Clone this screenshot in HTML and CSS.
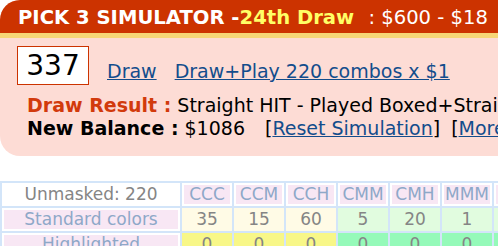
FILE: index.html
```html
<!DOCTYPE html>
<html lang="en">
<head>
    <meta charset="UTF-8">
    <meta name="viewport" content="width=device-width, initial-scale=1.0">
    <title>Pick 3 Simulator</title>
    <link rel="stylesheet" href="styles.css">
</head>
<body>
    <div class="page">
        <!-- Simulator panel -->
        <div class="sim">
            <div class="sim-title">PICK 3 SIMULATOR -<span class="draw-no">24th Draw</span><span class="cost"> : $600 - $18</span></div>
            <div class="sim-body">
                <div class="sim-top">
                    <div class="number">337</div>
                    <a href="#" class="action">Draw</a>
                    <a href="#" class="action">Draw+Play 220 combos x $1</a>
                </div>
                <div class="line"><span class="label red">Draw Result :</span> Straight HIT - Played Boxed+Straight 337</div>
                <div class="line"><span class="label">New Balance :</span> $1086<span class="bracket">[<a href="#">Reset Simulation</a>]</span><span class="bracket small-gap">[<a href="#">More Info</a>]</span></div>
            </div>
        </div>

        <!-- Combo mask table -->
        <table class="masks">
            <tr>
                <td class="first plain">Unmasked: 220</td>
                <td class="head">CCC</td>
                <td class="head">CCM</td>
                <td class="head">CCH</td>
                <td class="head">CMM</td>
                <td class="head">CMH</td>
                <td class="head">MMM</td>
                <td class="head">MMH</td>
            </tr>
            <tr>
                <td class="first head">Standard colors</td>
                <td class="val soft-yellow">35</td>
                <td class="val soft-yellow">15</td>
                <td class="val soft-yellow">60</td>
                <td class="val soft-green">5</td>
                <td class="val soft-green">20</td>
                <td class="val soft-green">1</td>
                <td class="val soft-green">4</td>
            </tr>
            <tr>
                <td class="first head">Highlighted</td>
                <td class="val yellow">0</td>
                <td class="val yellow">0</td>
                <td class="val yellow">0</td>
                <td class="val green">0</td>
                <td class="val green">0</td>
                <td class="val green">0</td>
                <td class="val green">0</td>
            </tr>
        </table>
    </div>
</body>
</html>
```

FILE: styles.css
```css
body {
    margin: 0;
    padding: 0;
    background-color: #fff;
    font-family: "DejaVu Sans", Verdana, sans-serif;
    color: #000;
    overflow: hidden;
}
.page {
    width: 800px;
}
.sim {
    border-radius: 20px 0 0 20px;
    overflow: hidden;
    background-color: #fddcd5;
}
.sim-title {
    background-color: #cc3300;
    border-bottom: 5px solid #f6d676;
    color: #fff;
    font-size: 19.6px;
    font-weight: bold;
    line-height: 30px;
    padding: 3px 0 0 18px;
    white-space: nowrap;
}
.draw-no {
    color: #ffff66;
}
.cost {
    font-weight: normal;
    margin-left: 8px;
}
.sim-body {
    padding: 8px 0 16px 0;
    font-size: 19px;
    white-space: nowrap;
}
.sim-top {
    display: flex;
    align-items: flex-end;
    padding-left: 17px;
}
.number {
    width: 70px;
    height: 37px;
    line-height: 37px;
    border: 1px solid #cc3300;
    background-color: #fff;
    font-size: 28px;
    text-align: center;
}
.action {
    margin: 0 0 3px 18px;
    line-height: 22px;
}
a {
    color: #134d8c;
}
.line {
    padding-left: 27px;
    line-height: 23px;
}
.sim-top + .line {
    margin-top: 9px;
}
.label {
    font-weight: bold;
}
.red {
    color: #d23a0c;
}
.bracket {
    margin-left: 20px;
}
.small-gap {
    margin-left: 11px;
}
.masks {
    margin-top: 25px;
    border-collapse: separate;
    border-spacing: 2px;
    background-color: #d3e5f9;
    font-size: 17px;
    color: #858585;
}
.masks td {
    border: 2px solid #fff;
    padding: 0;
    height: 19px;
    line-height: 19px;
    text-align: center;
    white-space: nowrap;
}
.masks .first {
    width: 174px;
}
.masks .plain {
    background-color: #fff;
}
.masks .head {
    background-color: #f8e7f4;
    color: #8ea8c8;
    width: 46px;
}
.masks .val {
    width: 46px;
}
.soft-yellow {
    background-color: #fffbe6;
}
.masks .soft-yellow {
    border-color: #fffbe6;
}
.soft-green {
    background-color: #e1fcdf;
}
.masks .soft-green {
    border-color: #e1fcdf;
}
.yellow {
    background-color: #f8f788;
}
.masks .yellow {
    border-color: #f8f788;
}
.green {
    background-color: #95fab9;
}
.masks .green {
    border-color: #95fab9;
}
```
